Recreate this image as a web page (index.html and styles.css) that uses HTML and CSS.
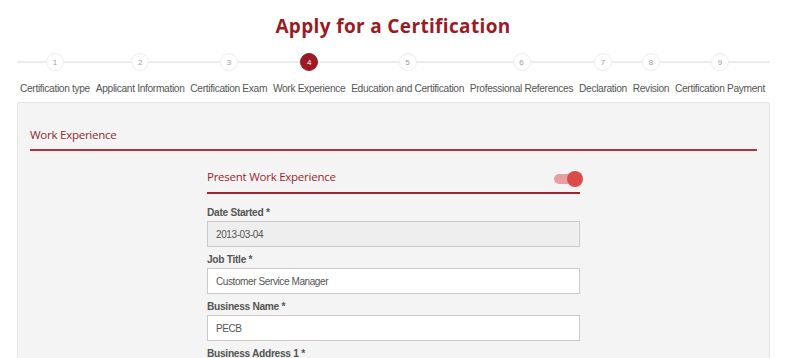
FILE: index.html
```html
<!DOCTYPE html>
<html lang="en">
<head>
<meta charset="utf-8">
<title>Apply for a Certification</title>
<link rel="stylesheet" href="styles.css">
</head>
<body>
<h1 class="title">Apply for a Certification</h1>
<div class="stepper">
  <div class="step"><span class="dot">1</span><span class="step-label">Certification type</span></div>
  <div class="step"><span class="dot">2</span><span class="step-label">Applicant Information</span></div>
  <div class="step"><span class="dot">3</span><span class="step-label">Certification Exam</span></div>
  <div class="step active"><span class="dot">4</span><span class="step-label">Work Experience</span></div>
  <div class="step"><span class="dot">5</span><span class="step-label">Education and Certification</span></div>
  <div class="step"><span class="dot">6</span><span class="step-label">Professional References</span></div>
  <div class="step"><span class="dot">7</span><span class="step-label">Declaration</span></div>
  <div class="step"><span class="dot">8</span><span class="step-label">Revision</span></div>
  <div class="step"><span class="dot">9</span><span class="step-label">Certification Payment</span></div>
</div>
<div class="panel">
  <h2 class="panel-title">Work Experience</h2>
  <div class="form">
    <div class="sub-head">
      <span class="sub-title">Present Work Experience</span>
      <span class="toggle"><span class="knob"></span></span>
    </div>
    <div class="field">
      <label class="field-label">Date Started *</label>
      <input class="field-input disabled" type="text" value="2013-03-04" readonly>
    </div>
    <div class="field">
      <label class="field-label">Job Title *</label>
      <input class="field-input" type="text" value="Customer Service Manager">
    </div>
    <div class="field">
      <label class="field-label">Business Name *</label>
      <input class="field-input" type="text" value="PECB">
    </div>
    <div class="field">
      <label class="field-label">Business Address 1 *</label>
      <input class="field-input" type="text" value="">
    </div>
  </div>
</div>
</body>
</html>
```
FILE: styles.css
```css
html, body {
  margin: 0;
  padding: 0;
  background: #ffffff;
}
body {
  padding-top: 14px;
  font-family: "Liberation Sans", Arial, sans-serif;
  overflow: hidden;
}
.title {
  margin: 0;
  text-align: center;
  font-family: "Open Sans", sans-serif;
  font-weight: 700;
  font-size: 19px;
  line-height: 24px;
  letter-spacing: 0.35px;
  color: #9b1b24;
}
.stepper {
  position: relative;
  display: flex;
  justify-content: space-between;
  margin: 15px 16px 0 17px;
  padding: 0 5px 0 3px;
}
.stepper::before {
  content: "";
  position: absolute;
  left: 0;
  right: 0;
  top: 8px;
  height: 2px;
  background: #ececec;
}
.step {
  position: relative;
  display: flex;
  flex-direction: column;
  align-items: center;
}
.dot {
  width: 18px;
  height: 18px;
  box-sizing: border-box;
  border-radius: 50%;
  background: #fff;
  border: 1px solid #eeeeee;
  display: flex;
  align-items: center;
  justify-content: center;
  font-size: 8px;
  color: #9a9a9a;
}
.step.active .dot {
  background: #9b1b24;
  border-color: #9b1b24;
  color: #fff;
}
.step-label {
  margin-top: 11px;
  font-size: 10.2px;
  line-height: 13px;
  letter-spacing: -0.33px;
  color: #555;
  white-space: nowrap;
}
.panel {
  margin: 7px 16px 0 17px;
  border: 1px solid #e3e3e3;
  border-radius: 3px;
  background: #f4f4f4;
  padding: 24px 12px 40px;
}
.panel-title {
  margin: 0;
  padding-bottom: 6px;
  border-bottom: 2px solid #b0323b;
  font-family: "Open Sans", sans-serif;
  font-weight: 400;
  font-size: 11.5px;
  line-height: 16px;
  letter-spacing: -0.25px;
  color: #8c2a30;
}
.form {
  width: 373px;
  margin: 18px auto 0;
}
.sub-head {
  display: flex;
  justify-content: space-between;
  align-items: flex-start;
  padding-bottom: 5px;
  border-bottom: 2px solid #a3212b;
}
.sub-title {
  font-family: "Open Sans", sans-serif;
  font-size: 11.5px;
  line-height: 16px;
  letter-spacing: -0.25px;
  color: #a01f2a;
}
.toggle {
  position: relative;
  display: flex;
  align-items: center;
  width: 29px;
  height: 16px;
  margin-top: 2px;
  margin-right: -3px;
}
.toggle::before {
  content: "";
  width: 24px;
  height: 10px;
  border-radius: 5px;
  background: #e6a0a2;
}
.knob {
  position: absolute;
  right: 0;
  top: 0;
  width: 16px;
  height: 16px;
  border-radius: 50%;
  background: #dc4a4a;
}
.field {
  margin-top: 7px;
}
.sub-head + .field {
  margin-top: 13px;
}
.field-label {
  display: block;
  margin-bottom: 2px;
  font-size: 10.2px;
  line-height: 12px;
  letter-spacing: -0.3px;
  font-weight: 700;
  color: #555;
}
.field-input {
  display: block;
  width: 100%;
  height: 26px;
  box-sizing: border-box;
  margin: 0;
  padding: 0 8px;
  border: 1px solid #d0c8c8;
  border-radius: 0;
  background: #ffffff;
  font-family: "Liberation Sans", Arial, sans-serif;
  font-size: 10px;
  letter-spacing: -0.4px;
  color: #555;
  outline: none;
}
.field-input.disabled {
  background: #eeeeee;
}
```
